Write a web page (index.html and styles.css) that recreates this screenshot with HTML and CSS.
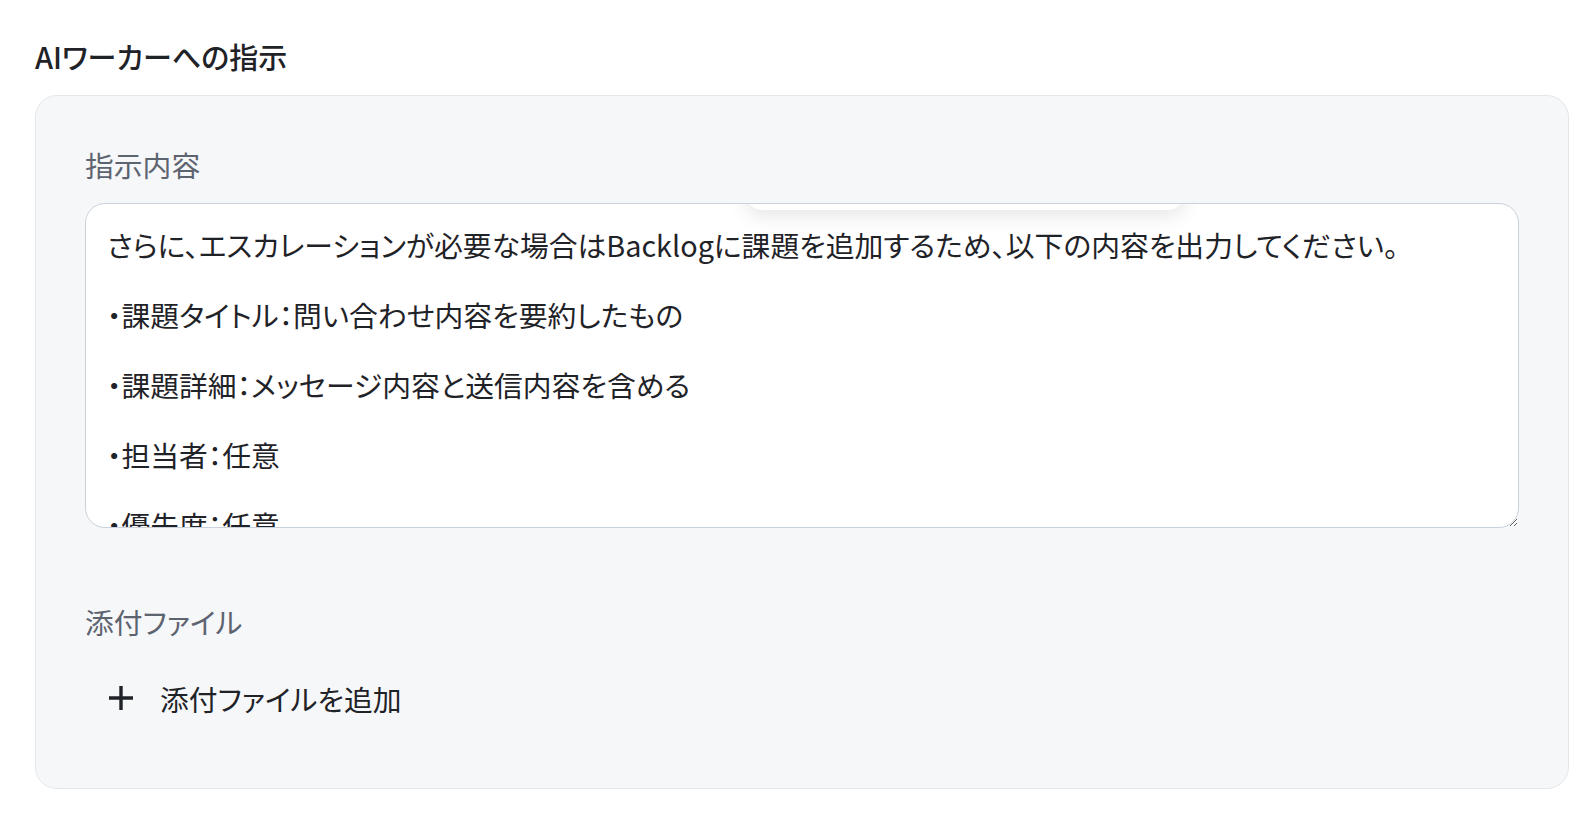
FILE: index.html
```html
<!DOCTYPE html>
<html lang="ja">
<head>
<meta charset="utf-8">
<title>AIワーカーへの指示</title>
<link rel="stylesheet" href="styles.css">
</head>
<body>
<div class="page">
  <h2 class="title">AIワーカーへの指示</h2>
  <section class="card">
    <label class="label" for="instr">指示内容</label>
    <div class="field">
      <textarea id="instr" class="textarea">さらに、エスカレーションが必要な場合はBacklogに課題を追加するため、以下の内容を出力してください。

・課題タイトル：問い合わせ内容を要約したもの

・課題詳細：メッセージ内容と送信内容を含める

・担当者：任意

・優先度：任意

・期限日：任意</textarea>
      <div class="peek-clip"><div class="peek"></div></div>
    </div>
    <div class="label label-files">添付ファイル</div>
    <button class="add-btn" type="button">
      <svg class="plus" width="26" height="26" viewBox="0 0 26 26" aria-hidden="true">
        <path d="M13 1V25M1 13H25" stroke="#1f2328" stroke-width="3.4" fill="none"/>
      </svg>
      <span>添付ファイルを追加</span>
    </button>
  </section>
</div>
</body>
</html>
```

FILE: styles.css
```css
html, body {
  margin: 0;
  padding: 0;
  background: #ffffff;
}

body {
  font-family: "Noto Sans CJK JP", "Noto Sans", sans-serif;
  color: #1f2328;
  font-feature-settings: "palt";
}

.page {
  padding: 36px 25px 0 35px;
}

.title {
  margin: 0;
  font-size: 29px;
  line-height: 40px;
  font-weight: 500;
  color: #1f2328;
}

.card {
  margin-top: 19px;
  background: #f6f7f9;
  border: 1px solid #e4e7eb;
  border-radius: 22px;
  padding: 49px 49px 62px 49px;
  display: flex;
  flex-direction: column;
  align-items: flex-start;
}

.label {
  display: block;
  font-size: 28.8px;
  line-height: 40px;
  color: #5d6470;
}

.field {
  position: relative;
  margin-top: 18px;
  width: 100%;
}

.textarea {
  display: block;
  box-sizing: border-box;
  width: 100%;
  height: 325px;
  margin: 0;
  padding: 23px 20px 20px 21px;
  border: 1px solid #c9d1dc;
  border-radius: 20px;
  background: #ffffff;
  color: #1f2328;
  font-family: "Noto Sans CJK JP", "Noto Sans", sans-serif;
  font-feature-settings: "palt";
  font-size: 28.8px;
  line-height: 35px;
  resize: vertical;
  overflow: hidden;
  outline: none;
}

.peek-clip {
  position: absolute;
  top: 1px;
  left: 1px;
  right: 1px;
  height: 60px;
  overflow: hidden;
  border-radius: 19px 19px 0 0;
  pointer-events: none;
}

.peek {
  position: absolute;
  left: 660px;
  width: 438px;
  top: -40px;
  height: 46px;
  background: #ffffff;
  border-radius: 16px;
  box-shadow: 0 6px 20px rgba(0, 0, 0, 0.1);
}

.label-files {
  margin-top: 74px;
}

.add-btn {
  margin-top: 28px;
  display: flex;
  align-items: center;
  gap: 26px;
  height: 56px;
  padding: 0 22px 0 23px;
  border: none;
  background: transparent;
  font-family: "Noto Sans CJK JP", "Noto Sans", sans-serif;
  font-feature-settings: "palt";
  font-size: 28.8px;
  font-weight: 400;
  color: #1f2328;
  cursor: pointer;
}

.plus {
  display: block;
  flex: none;
}
```
